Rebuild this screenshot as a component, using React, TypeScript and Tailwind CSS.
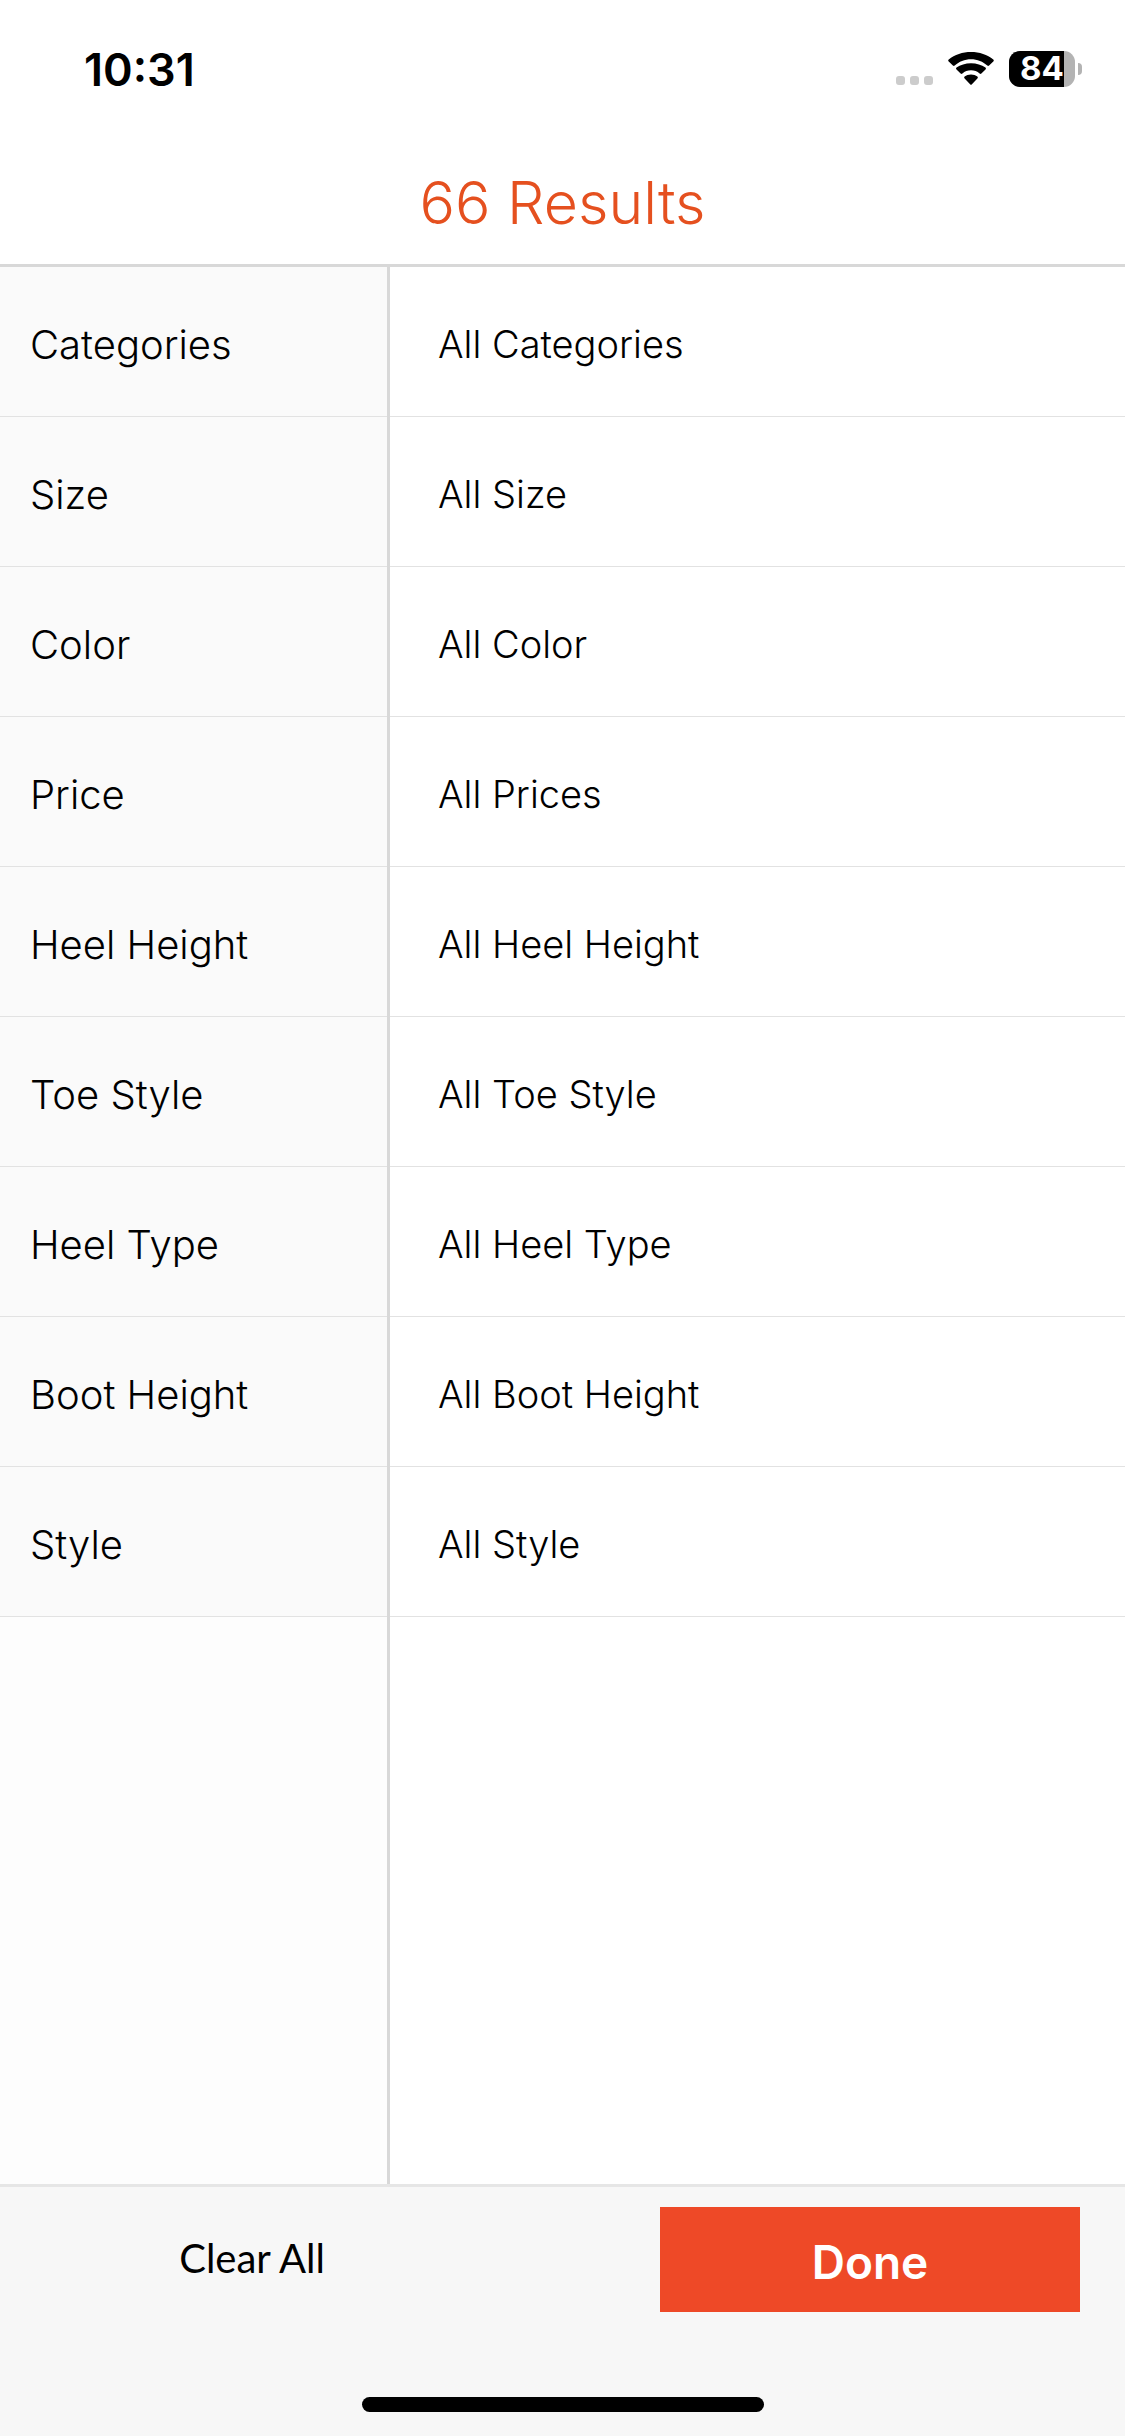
import { useState } from "react";

type Filter = {
  name: string;
  all: string;
};

const filters: Filter[] = [
  { name: "Categories", all: "All Categories" },
  { name: "Size", all: "All Size" },
  { name: "Color", all: "All Color" },
  { name: "Price", all: "All Prices" },
  { name: "Heel Height", all: "All Heel Height" },
  { name: "Toe Style", all: "All Toe Style" },
  { name: "Heel Type", all: "All Heel Type" },
  { name: "Boot Height", all: "All Boot Height" },
  { name: "Style", all: "All Style" },
];

function WifiIcon() {
  return (
    <svg width="46" height="34" viewBox="0 0 46 34" aria-hidden="true">
      <path d="M23 7.200c6.300 0 12 2.400 16.300 6.400a1.300 1.300 0 0 0 1.800 0l4.200-4.100a1.300 1.300 0 0 0 0-1.900C39.300 2.600 31.500 0 23 0S6.700 2.600.7 7.600a1.300 1.300 0 0 0 0 1.900l4.200 4.100a1.300 1.300 0 0 0 1.800 0C11 9.600 16.700 7.200 23 7.200z" />
      <path d="M23 18.300c3.300 0 6.300 1.200 8.600 3.200a1.300 1.300 0 0 0 1.800 0l4.100-4.100a1.200 1.200 0 0 0 0-1.800C33.600 12.900 28.600 11.300 23 11.300S12.400 12.900 8.500 15.600a1.200 1.200 0 0 0 0 1.800l4.100 4.100a1.300 1.300 0 0 0 1.800 0c2.300-2 5.300-3.200 8.600-3.200z" />
      <path d="M29.400 26.400a1.200 1.200 0 0 0 0-1.800c-1.700-1.400-3.900-2.200-6.400-2.200s-4.700.8-6.400 2.200a1.200 1.200 0 0 0 0 1.800l5.500 5.800a1.200 1.200 0 0 0 1.800 0z" />
    </svg>
  );
}

function Battery({ level }: { level: number }) {
  return (
    <div className="flex items-center gap-[3px]">
      <div className="relative flex h-9 w-[66px] items-center justify-center rounded-[11px] bg-[#b3b3b3]">
        <div
          className="absolute inset-y-0 left-0 rounded-l-[11px] bg-black"
          style={{ width: `${level}%` }}
        />
        <span className="relative text-[33px] font-bold text-white">
          {level}
        </span>
      </div>
      <div className="h-3 w-1 rounded-r-full bg-[#b3b3b3]" />
    </div>
  );
}

function StatusBar() {
  return (
    <div className="flex h-[138px] items-center justify-between pr-[43px] pl-[84px]">
      <span className="text-[45px] leading-none font-semibold">10:31</span>
      <div className="flex items-center">
        <div className="mr-[15px] flex gap-[5px] pt-[23px]">
          <span className="size-[9px] rounded-[3px] bg-[#cccccc]" />
          <span className="size-[9px] rounded-[3px] bg-[#cccccc]" />
          <span className="size-[9px] rounded-[3px] bg-[#cccccc]" />
        </div>
        <div className="mr-[15px]">
          <WifiIcon />
        </div>
        <Battery level={84} />
      </div>
    </div>
  );
}

export default function App() {
  const [active, setActive] = useState("");

  return (
    <div className="flex min-h-screen flex-col bg-white font-['Inter',sans-serif] text-black">
      <header className="border-b-[3px] border-[#d8d8d8]">
        <StatusBar />
        <h1 className="flex h-[126px] items-center justify-center pt-[2px] text-[59px] leading-none font-light text-[#e5501f]">
          66 Results
        </h1>
      </header>

      <main className="flex flex-1">
        <ul className="w-[390px] shrink-0 border-r-[3px] border-[#d8d8d8] bg-[#fdfdfd]">
          {filters.map((f) => (
            <li key={f.name}>
              <button
                type="button"
                aria-pressed={active === f.name}
                onClick={() => setActive(f.name)}
                className="flex h-[150px] w-full items-center border-b border-[#e2e2e2] bg-[#fafafa] pt-1.5 pl-[30px] text-[40px] font-light"
              >
                {f.name}
              </button>
            </li>
          ))}
        </ul>
        <ul className="flex-1">
          {filters.map((f) => (
            <li key={f.name}>
              <button
                type="button"
                onClick={() => setActive(f.name)}
                className="flex h-[150px] w-full items-center border-b border-[#e2e2e2] pt-1.5 pl-12 text-[38px] font-light"
              >
                {f.all}
              </button>
            </li>
          ))}
        </ul>
      </main>

      <footer className="border-t-[3px] border-[#e6e6e6] bg-[#f7f7f7] pt-5 pb-6">
        <div className="flex justify-between pr-[45px] pl-[42px]">
          <button
            type="button"
            onClick={() => setActive("")}
            className="h-[105px] w-[420px] pb-1 font-['Lato',sans-serif] text-[40px]"
          >
            Clear All
          </button>
          <button
            type="button"
            className="h-[105px] w-[420px] bg-[#ee4927] pt-1.5 text-[46px] font-semibold text-white"
          >
            Done
          </button>
        </div>
        <div className="mx-auto mt-[85px] h-[15px] w-[402px] rounded-full bg-black" />
      </footer>
    </div>
  );
}
